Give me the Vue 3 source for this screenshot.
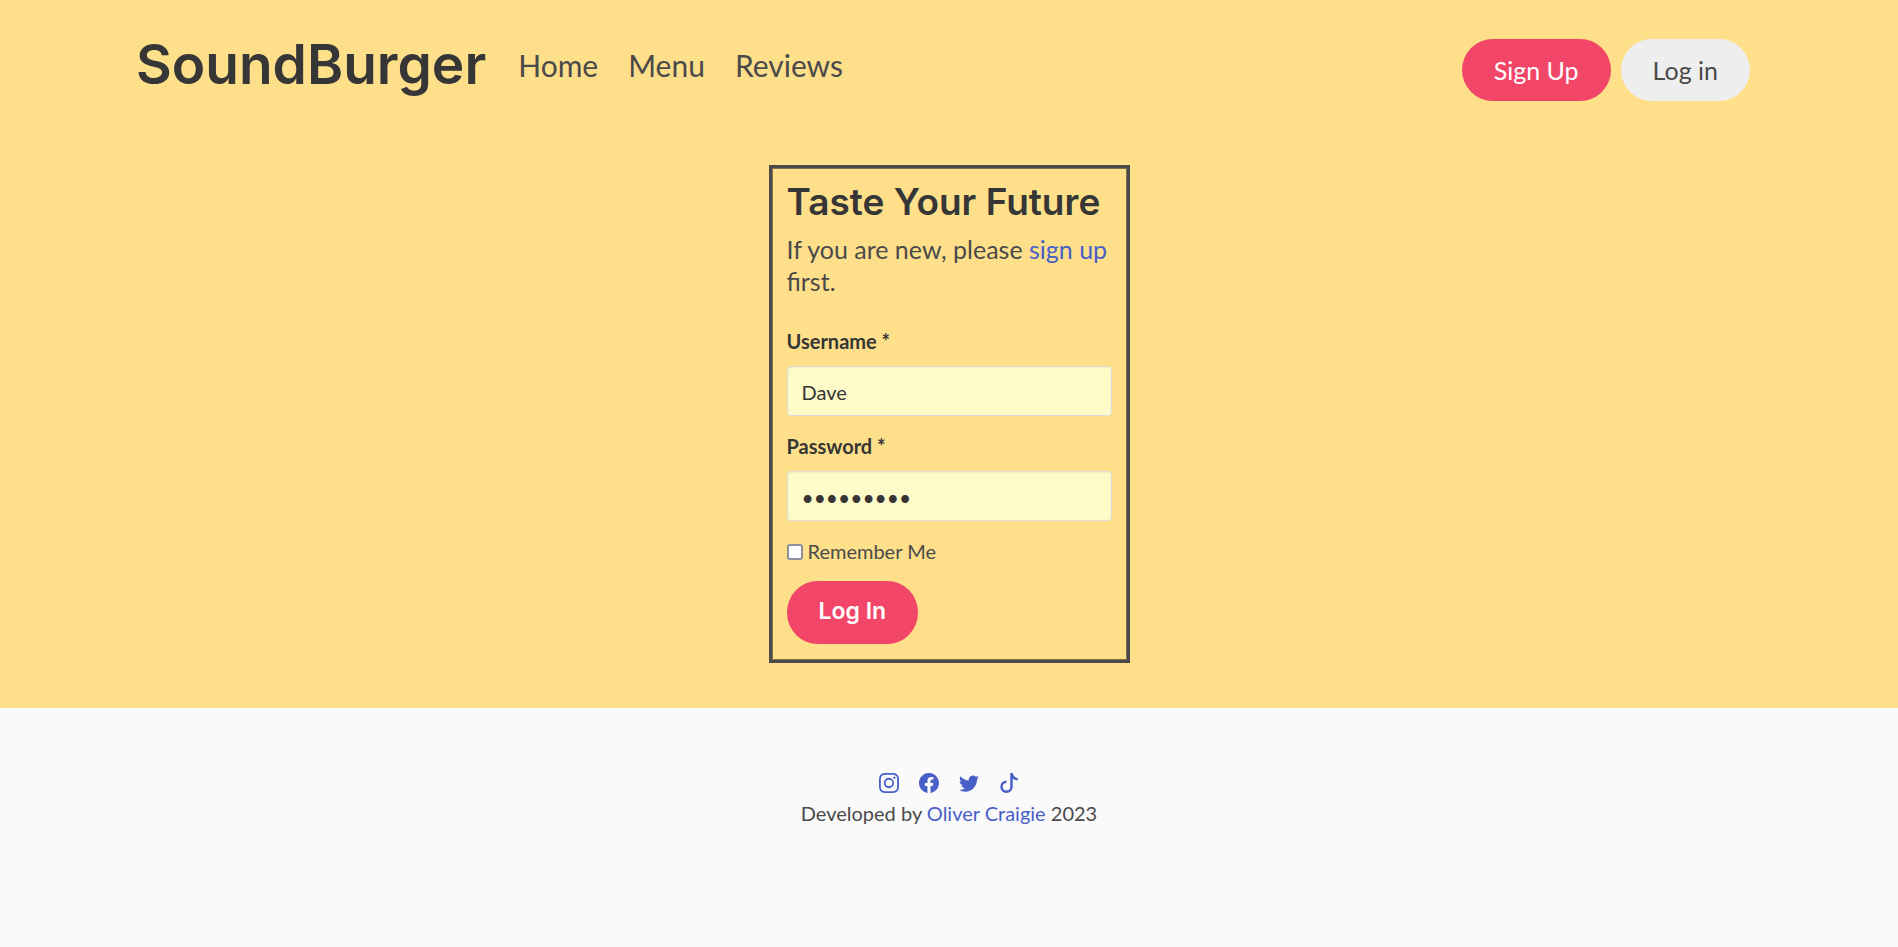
<script setup>
import { ref } from 'vue'

const navLinks = ['Home', 'Menu', 'Reviews']
const username = ref('Dave')
const password = ref('burger123')
const remember = ref(false)

const socials = [
  {
    name: 'Instagram',
    path: 'M8 0C5.829 0 5.556.01 4.703.048 3.85.088 3.269.222 2.76.42a3.917 3.917 0 0 0-1.417.923A3.927 3.927 0 0 0 .42 2.76C.222 3.268.087 3.85.048 4.7.01 5.555 0 5.827 0 8.001c0 2.172.01 2.444.048 3.297.04.852.174 1.433.372 1.942.205.526.478.972.923 1.417.444.445.89.719 1.416.923.51.198 1.09.333 1.942.372C5.555 15.99 5.827 16 8 16s2.444-.01 3.298-.048c.851-.04 1.434-.174 1.943-.372a3.916 3.916 0 0 0 1.416-.923c.445-.445.718-.891.923-1.417.197-.509.332-1.09.372-1.942C15.99 10.445 16 10.173 16 8s-.01-2.445-.048-3.299c-.04-.851-.175-1.433-.372-1.941a3.926 3.926 0 0 0-.923-1.417A3.911 3.911 0 0 0 13.24.42c-.51-.198-1.092-.333-1.943-.372C10.443.01 10.172 0 7.998 0h.003zm-.717 1.442h.718c2.136 0 2.389.007 3.232.046.78.035 1.204.166 1.486.275.373.145.64.319.92.599.28.28.453.546.598.92.11.281.24.705.275 1.485.039.843.047 1.096.047 3.231s-.008 2.389-.047 3.232c-.035.78-.166 1.203-.275 1.485a2.47 2.47 0 0 1-.599.919c-.28.28-.546.453-.92.598-.28.11-.704.24-1.485.276-.843.038-1.096.047-3.232.047s-2.39-.009-3.233-.047c-.78-.036-1.203-.166-1.485-.276a2.478 2.478 0 0 1-.92-.598 2.48 2.48 0 0 1-.6-.92c-.109-.281-.24-.705-.275-1.485-.038-.843-.046-1.096-.046-3.233 0-2.136.008-2.388.046-3.231.036-.78.166-1.204.276-1.486.145-.373.319-.64.599-.92.28-.28.546-.453.92-.598.282-.11.705-.24 1.485-.276.738-.034 1.024-.044 2.515-.045v.002zm4.988 1.328a.96.96 0 1 0 0 1.92.96.96 0 0 0 0-1.92zm-4.27 1.122a4.109 4.109 0 1 0 0 8.217 4.109 4.109 0 0 0 0-8.217zm0 1.441a2.667 2.667 0 1 1 0 5.334 2.667 2.667 0 0 1 0-5.334z'
  },
  {
    name: 'Facebook',
    path: 'M16 8.049c0-4.446-3.582-8.05-8-8.05C3.58 0-.002 3.603-.002 8.05c0 4.017 2.926 7.347 6.75 7.951v-5.625h-2.03V8.05H6.75V6.275c0-2.017 1.195-3.131 3.022-3.131.876 0 1.791.157 1.791.157v1.98h-1.009c-.993 0-1.303.621-1.303 1.258v1.51h2.218l-.354 2.326H9.25V16c3.824-.604 6.75-3.934 6.75-7.951z'
  },
  {
    name: 'Twitter',
    path: 'M5.026 15c6.038 0 9.341-5.003 9.341-9.334 0-.14 0-.282-.006-.422A6.685 6.685 0 0 0 16 3.542a6.658 6.658 0 0 1-1.889.518 3.301 3.301 0 0 0 1.447-1.817 6.533 6.533 0 0 1-2.087.793A3.286 3.286 0 0 0 7.875 6.03a9.325 9.325 0 0 1-6.767-3.429 3.289 3.289 0 0 0 1.018 4.382A3.323 3.323 0 0 1 .64 6.575v.045a3.288 3.288 0 0 0 2.632 3.218 3.203 3.203 0 0 1-.865.115 3.23 3.23 0 0 1-.614-.057 3.283 3.283 0 0 0 3.067 2.277A6.588 6.588 0 0 1 .78 13.58a6.32 6.32 0 0 1-.78-.045A9.344 9.344 0 0 0 5.026 15z'
  },
  {
    name: 'TikTok',
    path: 'M9 0h1.98c.144.715.54 1.617 1.235 2.512C12.895 3.389 13.797 4 15 4v2c-1.753 0-3.07-.814-4-1.829V11a5 5 0 1 1-5-5v2a3 3 0 1 0 3 3V0Z'
  }
]
</script>

<template>
  <div class="page">
    <section class="hero">
      <header class="navbar">
        <a class="brand" href="#">SoundBurger</a>
        <nav class="links">
          <a v-for="link in navLinks" :key="link" href="#">{{ link }}</a>
        </nav>
        <div class="actions">
          <a class="button primary" href="#">Sign Up</a>
          <a class="button light" href="#">Log in</a>
        </div>
      </header>

      <main class="card">
        <h1>Taste Your Future</h1>
        <p class="intro">If you are new, please <a href="#">sign up</a> first.</p>
        <form @submit.prevent>
          <div class="field">
            <label for="username">Username *</label>
            <input id="username" v-model="username" type="text" autocomplete="off">
          </div>
          <div class="field">
            <label for="password">Password *</label>
            <input id="password" v-model="password" type="password" autocomplete="off">
          </div>
          <div class="remember">
            <input id="remember" v-model="remember" type="checkbox">
            <label for="remember">Remember Me</label>
          </div>
          <button class="button primary submit" type="submit">Log In</button>
        </form>
      </main>
    </section>

    <footer class="footer">
      <div class="socials">
        <a v-for="item in socials" :key="item.name" href="#" :aria-label="item.name">
          <svg viewBox="0 0 16 16" aria-hidden="true"><path :d="item.path" /></svg>
        </a>
      </div>
      <p>Developed by <a href="#">Oliver Craigie</a> 2023</p>
    </footer>
  </div>
</template>

<style>
body {
  background: #fafafa;
}
</style>

<style scoped>
.page {
  font-family: Lato, sans-serif;
  font-size: 20px;
  line-height: 30px;
  color: #4a4a4a;
}

.page * {
  box-sizing: border-box;
}

a {
  color: #485fc7;
  text-decoration: none;
}

.hero {
  background: #ffdf8a;
  padding: 24px 136px 45px;
}

.navbar {
  display: flex;
  align-items: center;
  height: 92px;
  padding-right: 12px;
}

.brand {
  margin-bottom: 12px;
  font-family: Inter, sans-serif;
  font-size: 55px;
  font-weight: 600;
  line-height: 80px;
  color: #363636;
}

.links {
  display: flex;
  gap: 30px;
  margin-left: 32px;
  margin-bottom: 10px;
}

.links a {
  font-size: 30px;
  line-height: 40px;
  color: #4a4a4a;
}

.actions {
  display: flex;
  gap: 10px;
  margin-left: auto;
}

.button {
  display: flex;
  align-items: center;
  justify-content: center;
  height: 62px;
  padding: 0 32px;
  border: 0;
  border-radius: 31px;
  font-family: inherit;
  font-size: 25px;
  line-height: 38px;
  cursor: pointer;
}

.primary {
  background: #f14668;
  color: #fff;
}

.light {
  background: #eee;
  color: #4a4a4a;
}

.card {
  width: 361px;
  margin: 49px auto 0;
  padding: 14px 15px 16px;
  border: 3px solid #4a4a4a;
  box-shadow: inset 0 0 0 1px #80714f;
}

h1 {
  margin: 0;
  font-family: Inter, sans-serif;
  font-size: 37px;
  font-weight: 600;
  line-height: 40px;
  white-space: nowrap;
  color: #363636;
}

.intro {
  margin: 11px 0 29px;
  font-size: 25px;
  line-height: 32px;
}

.field {
  margin-bottom: 15px;
}

.field label {
  display: block;
  margin-bottom: 10px;
  font-weight: 700;
  color: #363636;
}

.field input {
  display: block;
  width: 100%;
  height: 50px;
  padding: 2px 14px 0;
  border: 1px solid #dbdbdb;
  border-radius: 4px;
  background: #fffbc8;
  box-shadow: inset 0 1px 2px rgba(10, 10, 10, 0.05);
  font-family: inherit;
  font-size: 20px;
  color: #363636;
}

.field input[type='password'] {
  font-size: 21px;
}

.remember {
  display: flex;
  align-items: center;
  gap: 5px;
  margin-bottom: 15px;
}

.remember input {
  appearance: none;
  width: 16px;
  height: 16px;
  margin: 2px 0 0;
  border: 2px solid #8f8f9d;
  border-radius: 3px;
  background: #fff;
}

.remember input:checked {
  background: #485fc7;
}

.submit {
  height: 63px;
  padding-bottom: 3px;
  font-family: Inter, sans-serif;
  font-size: 23px;
  font-weight: 600;
}

.footer {
  padding: 60px 30px;
  text-align: center;
}

.socials {
  display: flex;
  justify-content: center;
  gap: 20px;
  height: 30px;
  align-items: center;
}

.socials a {
  display: flex;
}

.socials svg {
  width: 20px;
  height: 20px;
  fill: currentColor;
}

.footer p {
  margin: 0;
}
</style>
